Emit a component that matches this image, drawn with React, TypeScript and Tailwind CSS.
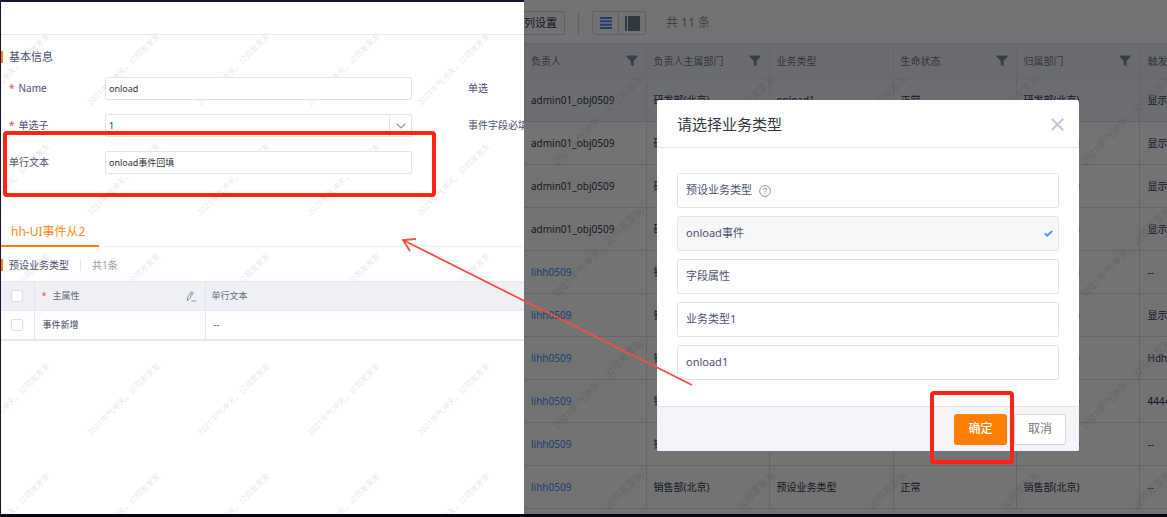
import { useState } from "react";
import type { ReactNode } from "react";

const columns = [
  { key: "owner", title: "负责人", filter: true },
  { key: "ownerDept", title: "负责人主属部门", filter: true },
  { key: "bizType", title: "业务类型", filter: false },
  { key: "status", title: "生命状态", filter: true },
  { key: "dept", title: "归属部门", filter: true },
];

const rows = [
  { owner: "admin01_obj0509", dept: "研发部(北京)", type: "onload1", trigger: "显示" },
  { owner: "admin01_obj0509", dept: "研发部(北京)", type: "onload1", trigger: "显示" },
  { owner: "admin01_obj0509", dept: "研发部(北京)", type: "onload1", trigger: "显示" },
  { owner: "admin01_obj0509", dept: "研发部(北京)", type: "onload1", trigger: "显示" },
  { owner: "lihh0509", dept: "销售部(北京)", type: "预设业务类型", trigger: "--" },
  { owner: "lihh0509", dept: "销售部(北京)", type: "预设业务类型", trigger: "显示" },
  { owner: "lihh0509", dept: "销售部(北京)", type: "预设业务类型", trigger: "Hdhd" },
  { owner: "lihh0509", dept: "销售部(北京)", type: "预设业务类型", trigger: "4444" },
  { owner: "lihh0509", dept: "销售部(北京)", type: "预设业务类型", trigger: "--" },
  { owner: "lihh0509", dept: "销售部(北京)", type: "预设业务类型", trigger: "--" },
];

const bizTypes = ["预设业务类型", "onload事件", "字段属性", "业务类型1", "onload1"];

function FilterIcon() {
  return (
    <svg viewBox="0 0 12 12" className="size-3 shrink-0 fill-[#7c8aa0]">
      <path d="M0.5 0.5h11v1.2L7.6 6v5.5L4.6 9.6V6L0.5 1.7z" />
    </svg>
  );
}

function EditIcon() {
  return (
    <svg
      viewBox="0 0 11 11"
      className="size-[11px] fill-none stroke-[#8a92a3]"
      strokeWidth="1"
      strokeLinejoin="round"
    >
      <path d="M1.2 9.6L1.6 6.6L5.2 1.2Q5.8 0.5 6.6 1Q7.5 1.6 7 2.4L3.5 8zM4.5 2.3L6.3 3.5M5.5 10h5" />
    </svg>
  );
}

function Watermark({ id, className, size, children }: {
  id: string;
  className: string;
  size: number;
  children: ReactNode;
}) {
  return (
    <svg className={className} aria-hidden="true">
      <defs>
        <pattern id={id} width={size} height={size} patternUnits="userSpaceOnUse">
          {children}
        </pattern>
      </defs>
      <rect width="100%" height="100%" fill={`url(#${id})`} />
    </svg>
  );
}

function Field({ id, label, required, children, side }: {
  id: string;
  label: string;
  required?: boolean;
  children: ReactNode;
  side?: string;
}) {
  return (
    <div className="flex h-[23px] items-center">
      <label htmlFor={id} className="w-24 shrink-0 whitespace-nowrap">
        {required && <span className="mr-1 text-[#f5483b]">*</span>}
        {label}
      </label>
      {children}
      {side && <span className="ml-14 whitespace-nowrap">{side}</span>}
    </div>
  );
}

function FormPane() {
  return (
    <section className="relative overflow-hidden border-t-2 border-l border-[#15142b] bg-white text-[10px] text-[#4c5170]">
      <Watermark
        id="form-mark"
        size={110}
        className="pointer-events-none absolute inset-0 size-full"
      >
        <text
          x="90"
          y="104"
          transform="rotate(-45 90 104)"
          className="fill-[#e6e6e8] text-[8px]"
        >
          2021牛气冲天，公司发发发
        </text>
        <text
          x="-20"
          y="104"
          transform="rotate(-45 -20 104)"
          className="fill-[#e6e6e8] text-[8px]"
        >
          2021牛气冲天，公司发发发
        </text>
      </Watermark>

      <div className="relative">
        <div className="h-[33px] border-b border-[#e9e9eb]" />
        <h2 className="mt-4 flex h-3 items-center border-l-2 border-[#ff8000] pl-1.5 text-[11px]">
          基本信息
        </h2>

        <form className="mt-3.5 flex flex-col gap-3.5 pl-2">
          <Field id="name" label="Name" required side="单选">
            <input
              id="name"
              defaultValue="onload"
              className="h-[23px] w-[307px] rounded-[2px] border border-[#e3e4e8] bg-white px-[3px] text-[9px] text-[#333]"
            />
          </Field>
          <Field id="single" label="单选子" required side="事件字段必填">
            <div className="relative">
              <select
                id="single"
                className="h-[23px] w-[307px] appearance-none rounded-[2px] border border-[#e3e4e8] bg-white px-[3px] text-[9px] text-[#333]"
              >
                <option>1</option>
              </select>
              <span className="pointer-events-none absolute inset-y-0 right-0 flex w-[23px] items-center justify-center border-l border-[#e3e4e8]">
                <svg viewBox="0 0 10 6" className="w-2.5 fill-none stroke-[#8f97a8]">
                  <path d="M0.7 0.8L5 5L9.3 0.8" strokeWidth="1.2" />
                </svg>
              </span>
            </div>
          </Field>
          <div className="relative">
            <Field id="line" label="单行文本">
              <input
                id="line"
                defaultValue="onload事件回填"
                className="h-[23px] w-[307px] rounded-[2px] border border-[#e3e4e8] bg-white px-[3px] text-[9px] text-[#333]"
              />
            </Field>
            <div className="pointer-events-none absolute -top-5 -left-1.5 h-[66px] w-[433px] rounded-[4px] border-4 border-[#ff2314]" />
          </div>
        </form>

        <div className="mt-[47px] border-b border-[#eeeff5]">
          <button
            type="button"
            className="-mb-px flex h-[26px] items-center border-b-2 border-[#ff8000] pr-[14px] pb-0.5 pl-2.5 text-[12px] text-[#ff8a14]"
          >
            hh-UI事件从2
          </button>
        </div>

        <div className="mt-3 flex h-3 items-center border-l-2 border-[#ff8000] pl-1.5">
          <span>预设业务类型</span>
          <span className="ml-[11px] h-3 w-px bg-[#e3e4e8]" />
          <span className="ml-[11px] text-[#9a9da6]">共1条</span>
        </div>

        <table className="mt-2.5 w-full table-fixed border-collapse text-left text-[9px]">
          <colgroup>
            <col className="w-[33px]" />
            <col className="w-[171px]" />
            <col />
          </colgroup>
          <thead>
            <tr className="h-[29px] border-y border-[#e6e8ef] bg-[#eff0f5] text-[#666b7a]">
              <th className="border-r border-[#e2e4ef] font-normal">
                <input
                  type="checkbox"
                  aria-label="全选"
                  className="mx-auto block size-3 appearance-none rounded-[2px] border border-[#dcdee5] bg-white"
                />
              </th>
              <th className="border-r border-[#e2e4ef] pr-2 pl-[7px] font-normal">
                <div className="flex items-center">
                  <span className="mr-1.5 text-[#f5483b]">*</span>
                  主属性
                  <button type="button" aria-label="编辑" className="ml-auto">
                    <EditIcon />
                  </button>
                </div>
              </th>
              <th className="pl-1.5 font-normal">单行文本</th>
            </tr>
          </thead>
          <tbody>
            <tr className="h-[29px] border-b-2 border-[#e6e8ef] bg-white">
              <td className="border-r border-[#e2e4ef]">
                <input
                  type="checkbox"
                  aria-label="选择事件新增"
                  className="mx-auto block size-3 appearance-none rounded-[2px] border border-[#dcdee5] bg-white"
                />
              </td>
              <td className="border-r border-[#e2e4ef] pl-2 text-[#3a3f55]">事件新增</td>
              <td className="pl-2">--</td>
            </tr>
          </tbody>
        </table>
      </div>
    </section>
  );
}

function ListPane() {
  return (
    <div className="text-[10px] text-[#30364f]">
      <div className="flex h-[43px] items-center pt-[3px] text-[11px]">
        <button
          type="button"
          className="-ml-2 flex h-6 items-center rounded-[2px] border border-[#d5d8e0] px-[7px]"
        >
          列设置
        </button>
        <span className="ml-[13px] h-6 w-px bg-[#d5d8e0]" />
        <div className="ml-[13px] flex h-6 rounded-[3px] border border-[#d5d8e0]">
          <button
            type="button"
            aria-label="列表"
            className="flex w-[26px] items-center justify-center border-r border-[#d5d8e0]"
          >
            <svg viewBox="0 0 12 12" className="size-3 fill-[#4a86ff]">
              <path d="M0 0h12v2H0zM0 3.3h12v2H0zM0 6.7h12v2H0zM0 10h12V12H0z" />
            </svg>
          </button>
          <button
            type="button"
            aria-label="分栏"
            className="flex w-[26px] items-center justify-center"
          >
            <svg viewBox="0 0 15 15" className="size-[15px] fill-[#6f7c91]">
              <path d="M0 0h2v15H0zM3 0h12v15H3z" />
            </svg>
          </button>
        </div>
        <span className="ml-5 text-[12px] text-[#8b93a5]">共 11 条</span>
      </div>

      <div className="relative">
        <table className="w-[800px] table-fixed border-collapse text-left">
          <colgroup>
            <col className="w-[122px]" />
            <col className="w-[123px]" />
            <col className="w-[124px]" />
            <col className="w-[123px]" />
            <col className="w-[123px]" />
            <col />
          </colgroup>
          <thead>
            <tr className="h-[35px] border-y border-[#e0e3ea] bg-[#eef0f5] text-[#6f7584]">
              {columns.map((col) => (
                <th key={col.key} className="border-r border-[#e0e3ea] pr-2 pl-[7px] font-normal">
                  <div className="flex items-center justify-between">
                    {col.title}
                    {col.filter && <FilterIcon />}
                  </div>
                </th>
              ))}
              <th className="pl-2 font-normal">触发</th>
            </tr>
          </thead>
          <tbody>
            {rows.map((row, i) => (
              <tr
                key={i}
                className={
                  i === 0
                    ? "h-[43px] border-b border-[#dcdfea] bg-[#f0f3fb]"
                    : "h-[43px] border-b border-[#dcdfea]"
                }
              >
                <td className="border-r border-[#dcdfea] pl-[7px]">
                  {row.owner === "lihh0509" ? (
                    <a href="#" className="text-[#3b90f8]">
                      {row.owner}
                    </a>
                  ) : (
                    row.owner
                  )}
                </td>
                <td className="border-r border-[#dcdfea] pl-[7px]">{row.dept}</td>
                <td className="border-r border-[#dcdfea] pl-[7px]">{row.type}</td>
                <td className="border-r border-[#dcdfea] pl-[7px]">正常</td>
                <td className="border-r border-[#dcdfea] pl-[7px]">{row.dept}</td>
                <td className="pl-2">{row.trigger}</td>
              </tr>
            ))}
          </tbody>
        </table>
        <Watermark
          id="list-mark"
          size={132}
          className="pointer-events-none absolute top-[35px] left-0 h-full w-full"
        >
          <text
            x="33"
            y="88"
            transform="rotate(-45 33 88)"
            className="fill-[#d0d0d4]/60 text-[10px]"
          >
            2021牛气冲天，公司发发发
          </text>
        </Watermark>
      </div>
    </div>
  );
}

function TypeDialog() {
  const [selected, setSelected] = useState("onload事件");

  return (
    <div
      role="dialog"
      aria-label="请选择业务类型"
      className="mr-[88px] ml-[133px] flex-1 self-start rounded-[2px] bg-white text-[11px] text-[#4c5170]"
    >
      <header className="flex h-12 items-center justify-between border-b border-[#e6e7eb] pt-0.5 pr-[15px] pl-5">
        <h2 className="text-[15px] text-[#33363f]">请选择业务类型</h2>
        <button type="button" aria-label="关闭">
          <svg viewBox="0 0 13 13" className="size-[13px] stroke-[#c3c8d6]" strokeWidth="2">
            <path d="M0.8 0.8L12.2 12.2M12.2 0.8L0.8 12.2" />
          </svg>
        </button>
      </header>
      <div className="flex flex-col gap-2 px-5 pt-[25px] pb-[26px]">
        {bizTypes.map((type) => (
          <button
            key={type}
            type="button"
            onClick={() => setSelected(type)}
            className={
              type === selected
                ? "flex h-[35px] items-center rounded-[2px] border border-[#e3e4e8] bg-[#f7f7f7] pr-[5px] pl-2"
                : "flex h-[35px] items-center rounded-[2px] border border-[#e3e4e8] pr-[5px] pl-2"
            }
          >
            {type}
            {type === "预设业务类型" && (
              <svg viewBox="0 0 12 12" className="ml-[7px] size-3 fill-none stroke-[#7f8897]">
                <circle cx="6" cy="6" r="5.4" strokeWidth="0.9" />
                <path d="M4.3 4.8Q4.4 3.2 6 3.2Q7.6 3.2 7.6 4.6Q7.6 5.4 6.7 5.9Q6 6.3 6 7.2M6 8.2v1" />
              </svg>
            )}
            {type === selected && (
              <svg viewBox="0 0 9 7" className="ml-auto w-[9px] fill-none stroke-[#4a90f0]">
                <path d="M0.7 3.4L3.2 5.7L8.3 0.9" strokeWidth="1.9" />
              </svg>
            )}
          </button>
        ))}
      </div>
      <footer className="flex h-[45px] items-center justify-end gap-[7px] rounded-b-[2px] border-t border-[#e6e7eb] bg-[#f4f5fa] pr-[13px]">
        <button
          type="button"
          className="order-2 h-[31px] w-[52px] rounded-[3px] border border-[#d3d4d8] bg-white text-[12px] text-[#77797f]"
        >
          取消
        </button>
        <div className="relative">
          <button
            type="button"
            className="block h-[31px] w-[53px] rounded-[3px] bg-[#ff8000] text-[12px] font-medium text-white"
          >
            确定
          </button>
          <div className="pointer-events-none absolute -top-[23px] -right-[7px] -bottom-[19px] -left-6 z-10 rounded-[4px] border-4 border-[#ff2314]" />
        </div>
      </footer>
    </div>
  );
}

export default function App() {
  return (
    <main className="relative flex h-screen flex-col bg-[#080614] font-['Noto_Sans','Noto_Sans_CJK_SC',sans-serif]">
      <div className="mb-[3px] grid min-h-0 flex-1 grid-cols-[524fr_643fr]">
        <FormPane />
        <section className="relative overflow-hidden bg-white">
          <ListPane />
          <div className="absolute inset-0 flex bg-black/55 pt-[100px]">
            <TypeDialog />
          </div>
        </section>
      </div>
      <svg
        className="pointer-events-none absolute inset-0 size-full fill-none stroke-[#ea5343]"
        strokeWidth="1.8"
        aria-hidden="true"
      >
        <path d="M692 385L403 240M416 239L403 240L410 251" />
      </svg>
    </main>
  );
}
